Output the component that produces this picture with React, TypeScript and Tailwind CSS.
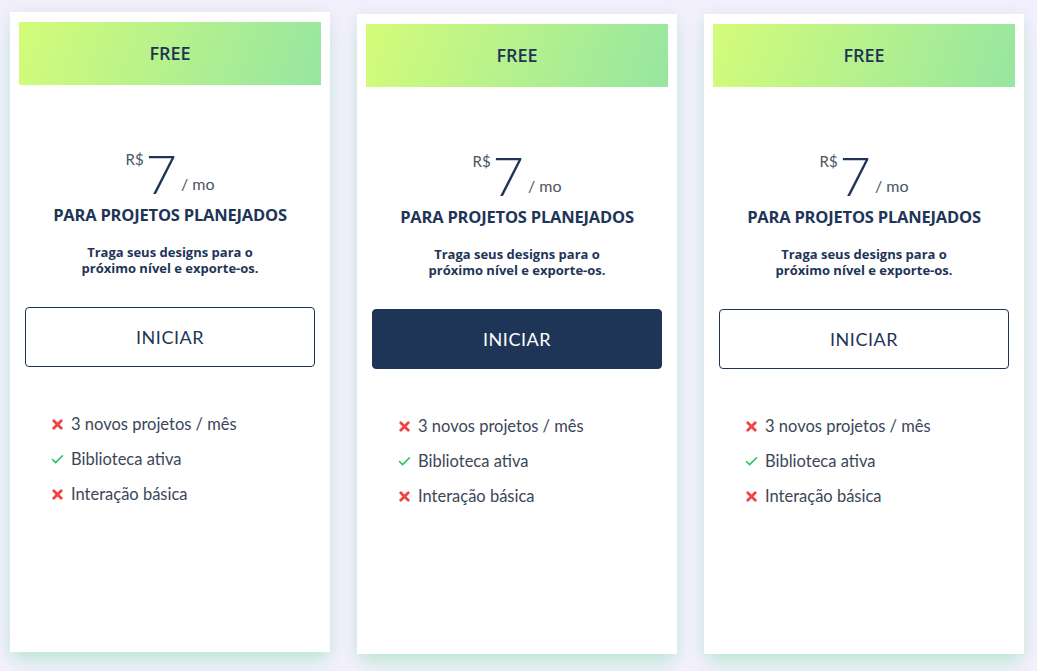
import React from 'react';
import { X, Check } from 'lucide-react';

type Feature = { label: string; ok: boolean };

const features: Feature[] = [
  { label: '3 novos projetos / mês', ok: false },
  { label: 'Biblioteca ativa', ok: true },
  { label: 'Interação básica', ok: false },
];

const PlanCard: React.FC<{ filled?: boolean; lifted?: boolean }> = ({ filled, lifted }) => (
  <div
    className={`w-[320px] h-[640px] shrink-0 bg-white px-[9px] pt-[10px] flex flex-col items-center shadow-[0_12px_18px_-4px_rgba(74,222,128,0.3),0_0_14px_rgba(148,190,170,0.18)] ${
      lifted ? '-translate-y-0.5' : ''
    }`}
  >
    <div className="w-full h-[63px] flex items-center justify-center bg-[linear-gradient(110deg,#d4fc79,#96e6a1)]">
      <span className="font-['Open_Sans'] font-semibold text-[18px] text-[#1e3557]">FREE</span>
    </div>

    <div className="mt-[69px] flex items-end text-[#1e3557]">
      <span className="self-start -mt-[2px] text-[15px] text-[#4b5563] leading-none">R$</span>
      <span className="text-[54px] font-light leading-[40px] ml-[2px]">7</span>
      <span className="text-[16px] text-[#4b5563] leading-none ml-[4px] mb-[2px]">/ mo</span>
    </div>

    <h3 className="mt-[9px] font-['Open_Sans'] text-[16.5px] font-bold text-[#1e3557] tracking-[-0.2px]">
      PARA PROJETOS PLANEJADOS
    </h3>

    <p className="mt-[16px] font-['Open_Sans'] text-[13px] font-bold text-[#1e3557] text-center leading-[16px]">
      Traga seus designs para o
      <br />
      próximo nível e exporte-os.
    </p>

    <button
      className={`mt-[31px] w-[290px] h-[60px] rounded-[4px] border border-[#1e3557] text-[18px] tracking-[0.5px] pt-[2px] ${
        filled ? 'bg-[#1e3557] text-white' : 'bg-white text-[#1e3557]'
      }`}
    >
      INICIAR
    </button>

    <ul className="mt-[48px] w-full pl-[31px] flex flex-col gap-[15px]">
      {features.map((f) => (
        <li key={f.label} className="flex items-center gap-[6px] h-[20px] text-[16.5px] text-[#3b4658]">
          {f.ok ? (
            <Check size={15} strokeWidth={2.5} className="text-[#22c55e]" />
          ) : (
            <X size={15} strokeWidth={4.5} className="text-[#ef4444]" />
          )}
          <span>{f.label}</span>
        </li>
      ))}
    </ul>
  </div>
);

const App: React.FC = () => {
  return (
    <div className="min-h-screen bg-[#f3f0fd] font-['Lato',sans-serif] overflow-hidden">
      <div className="flex items-start gap-[27px] pl-[10px] pt-[14px]">
        <PlanCard lifted />
        <PlanCard filled />
        <PlanCard />
      </div>
    </div>
  );
};

export default App;
